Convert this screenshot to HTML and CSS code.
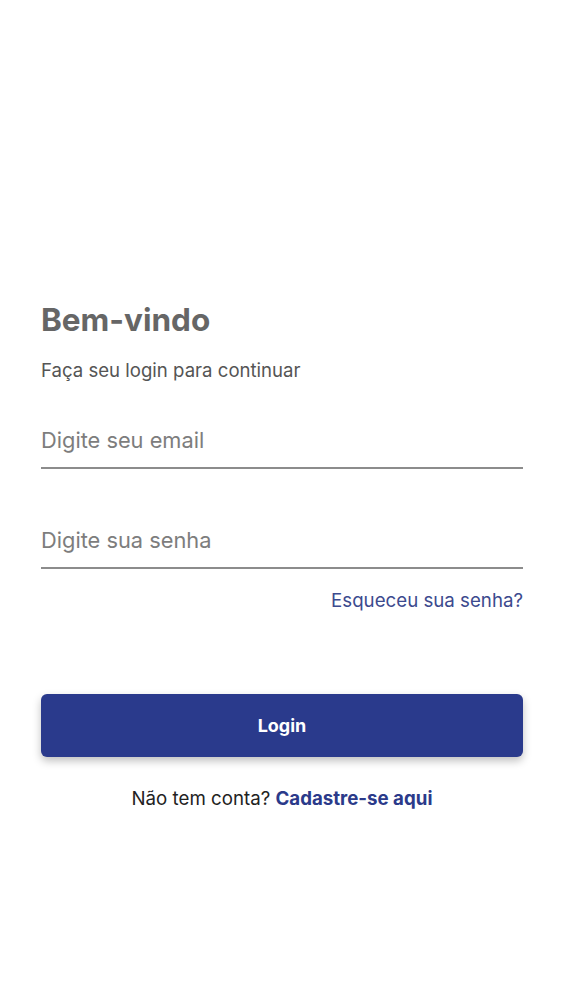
FILE: index.html
```html
<!DOCTYPE html>
<html lang="pt">
<head>
    <meta charset="UTF-8">
    <meta name="viewport" content="width=device-width, initial-scale=1.0">
    <title>Login</title>
    <link rel="stylesheet" href="styles.css">
</head>
<body>
    <div class="container">
      <h1 class="title">Bem-vindo</h1>
      <p class="subtitle">Faça seu login para continuar</p>

      <div class="form-group">
          <input class="field" type="email" placeholder="Digite seu email" />
      </div>

      <div class="form-group">
          <input class="field" type="password" placeholder="Digite sua senha" />
      </div>

      <div class="forgot">
          <a href="#">Esqueceu sua senha?</a>
      </div>

      <button class="btn">Login</button>

      <p class="signup">Não tem conta? <a href="#">Cadastre-se aqui</a></p>
    </div>
</body>
</html>
```

FILE: styles.css
```css
  body {
      font-family: Inter, "Noto Sans", sans-serif;
      background-color: #fff;
      margin: 0;
  }

  .container {
      padding: 300px 40px 0 41px;
  }

  .title {
      margin: 0;
      font-size: 31.5px;
      font-weight: 700;
      color: #666;
      line-height: 40px;
  }

  .subtitle {
      margin: 20px 0 0;
      font-size: 18.6px;
      color: #555;
      line-height: 20px;
  }

  .form-group {
      margin-top: 32px;
  }

  .form-group + .form-group {
      margin-top: 43px;
  }

  .field {
      display: block;
      width: 100%;
      box-sizing: border-box;
      height: 57px;
      padding: 0;
      border: none;
      border-bottom: 2px solid #8c8c8c;
      font-family: inherit;
      font-size: 21.8px;
      color: #333;
      outline: none;
  }

  .field::placeholder {
      color: #7d7d7d;
  }

  .forgot {
      text-align: right;
      margin-top: 20px;
      line-height: 24px;
  }

  .forgot a {
      color: #3c4a8e;
      font-size: 18.7px;
      text-decoration: none;
  }

  .btn {
      display: block;
      width: 100%;
      height: 63px;
      margin-top: 81px;
      background-color: #2a3a8c;
      color: #fff;
      border: none;
      border-radius: 6px;
      font-family: inherit;
      font-size: 18px;
      font-weight: 700;
      box-shadow: 0 4px 8px rgba(0, 0, 0, 0.25);
      cursor: pointer;
  }

  .signup {
      text-align: center;
      margin: 30px 0 0;
      font-size: 18.7px;
      color: #222;
  }

  .signup a {
      color: #2b3a8a;
      font-weight: 700;
      text-decoration: none;
  }
```
